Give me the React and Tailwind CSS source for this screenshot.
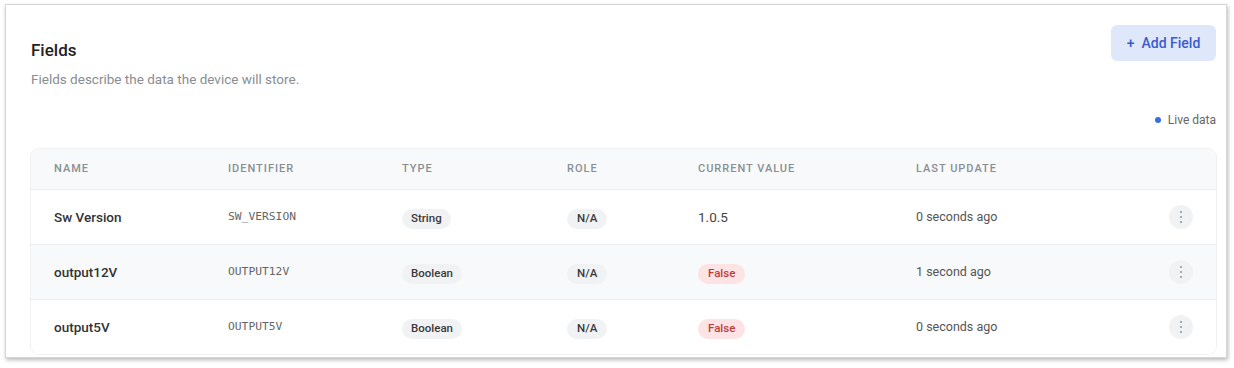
import React from 'react';

const rows = [
  { name: 'Sw Version', id: 'SW_VERSION', type: 'String', role: 'N/A', value: '1.0.5', bool: false, updated: '0 seconds ago' },
  { name: 'output12V', id: 'OUTPUT12V', type: 'Boolean', role: 'N/A', value: 'False', bool: true, updated: '1 second ago' },
  { name: 'output5V', id: 'OUTPUT5V', type: 'Boolean', role: 'N/A', value: 'False', bool: true, updated: '0 seconds ago' },
];

const cols = 'grid grid-cols-[174px_174px_165px_131px_218px_1fr_24px] items-center px-[23px]';

function Pill({ children }) {
  return (
    <span className="inline-flex h-[20px] items-center rounded-full bg-[#f1f2f4] px-[9px] text-[11.5px] font-medium text-[#3a3a3a]">
      {children}
    </span>
  );
}

function Kebab() {
  return (
    <button className="flex h-[24px] w-[24px] flex-col items-center justify-center gap-[2.5px] rounded-full bg-[#f1f2f4]">
      <span className="h-[2.5px] w-[2.5px] rounded-full bg-[#8f9398]" />
      <span className="h-[2.5px] w-[2.5px] rounded-full bg-[#8f9398]" />
      <span className="h-[2.5px] w-[2.5px] rounded-full bg-[#8f9398]" />
    </button>
  );
}

export default function App() {
  return (
    <div className="h-[368px] w-[1234px] bg-white pl-[5px] pt-[4px] font-['Roboto',sans-serif]">
      <div className="w-[1222px] border border-[#d6d6d6] bg-white pb-[3px] pl-[25px] pr-[10px] pt-[20px] shadow-[1px_2px_4px_rgba(0,0,0,0.28)]">
        {/* Header */}
        <div className="flex items-start justify-between">
          <div className="pt-[13px]">
            <h2 className="text-[17px] font-medium leading-[24px] text-[#222]">Fields</h2>
            <p className="mt-[8px] text-[13.5px] leading-[18px] text-[#8a8d91]">
              Fields describe the data the device will store.
            </p>
          </div>
          <button className="flex h-[36px] w-[105px] items-center justify-center gap-[7px] rounded-md bg-[#dfe8fb] text-[14px] font-medium text-[#3a5bd0]">
            <span className="text-[14px]">+</span>
            <span>Add Field</span>
          </button>
        </div>

        {/* Live data */}
        <div className="mt-[24px] flex items-center justify-end gap-[7px] text-[12px] leading-[16px] text-[#666]">
          <span className="h-[6px] w-[6px] rounded-full bg-[#3b6fe0]" />
          <span>Live data</span>
        </div>

        {/* Table */}
        <div className="mt-[21px] overflow-hidden rounded-lg shadow-[0_0_0_1px_#eef0f2]">
          <div className={`${cols} h-[40px] bg-[#f8f9fa] text-[11px] font-medium uppercase tracking-[0.09em] text-[#8a8f94]`}>
            <span>Name</span>
            <span>Identifier</span>
            <span>Type</span>
            <span>Role</span>
            <span>Current Value</span>
            <span>Last Update</span>
            <span />
          </div>
          {rows.map((r, i) => (
            <div
              key={r.id}
              className={`${cols} h-[55px] border-t border-[#eceef0] ${i === 1 ? 'bg-[#f8f9fa]' : 'bg-white'}`}
            >
              <span className="text-[13.5px] font-medium text-[#333]">{r.name}</span>
              <span className="font-['DejaVu_Sans_Mono',monospace] text-[11.3px] text-[#666]">{r.id}</span>
              <span>
                <Pill>{r.type}</Pill>
              </span>
              <span>
                <span className="inline-flex h-[20px] items-center rounded-full bg-[#f1f2f4] px-[10px] text-[11.5px] font-medium text-[#3a3a3a]">
                  {r.role}
                </span>
              </span>
              <span>
                {r.bool ? (
                  <span className="inline-flex h-[20px] items-center rounded-full bg-[#fde3e3] px-[10px] text-[11.5px] font-medium text-[#c23b3b]">
                    {r.value}
                  </span>
                ) : (
                  <span className="text-[13.5px] text-[#444]">{r.value}</span>
                )}
              </span>
              <span className="text-[12.5px] text-[#555]">{r.updated}</span>
              <Kebab />
            </div>
          ))}
        </div>
      </div>
    </div>
  );
}
